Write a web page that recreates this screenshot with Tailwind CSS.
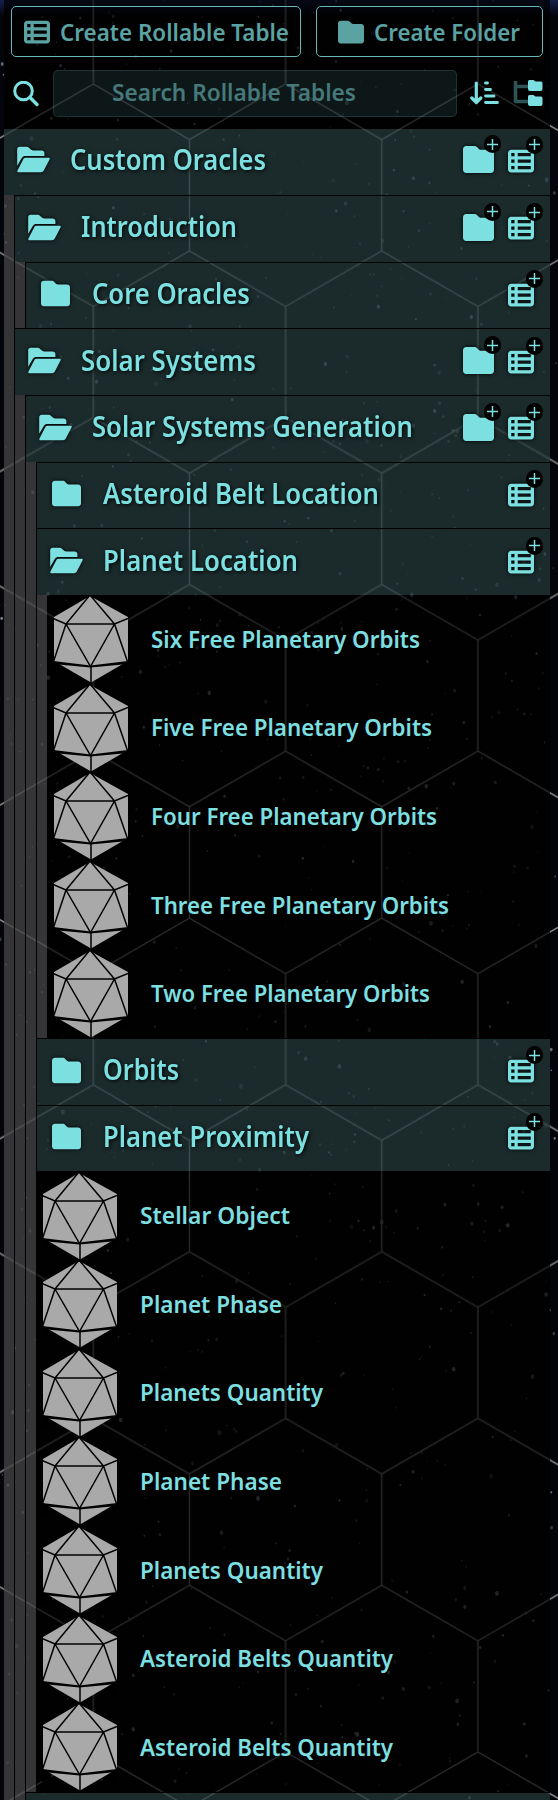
<!DOCTYPE html>
<html lang="en">
<head>
<meta charset="utf-8">
<title>Rollable Tables</title>
<script src="https://cdn.jsdelivr.net/npm/@tailwindcss/browser@4"></script>
</head>
<body class="bg-black">
<svg class="hidden">
  <symbol id="open" viewBox="0 0 576 512"><path d="M84 224L0 365V76C0 48 18 32 44 32H166c17 0 33 7 45 19l31 28c12 11 28 17 45 17H432c28 0 48 20 48 48v48H144c-25 0-48 12-60 32zm30 16C121 230 132 224 146 224H556c16 0 24 14 17 28l-104 198C459 470 443 480 422 480H22c-16 0-24-14-17-28l109-212z"/></symbol>
  <symbol id="folder" viewBox="0 0 512 512"><path d="M54 480H458c32 0 54-22 54-54V150c0-32-22-54-54-54H298c-14 0-24-5-34-14L234 52C220 38 206 32 186 32H54C22 32 0 54 0 86V426c0 32 22 54 54 54z"/></symbol>
  <symbol id="list" viewBox="0 0 512 512"><path fill-rule="evenodd" d="M0 96C0 60.700 28.700 32 64 32H448c35.300 0 64 28.700 64 64V416c0 35.300-28.700 64-64 64H64c-35.300 0-64-28.700-64-64V96zm64 0v64h64V96H64zm384 0H192v64H448V96zM64 224v64h64V224H64zm384 0H192v64H448V224zM64 352v64h64V352H64zm384 0H192v64H448V352z"/></symbol>
  <symbol id="d20" viewBox="0 0 75 88"><path fill="#a9a9a9" d="M37 1 75 22V66L38 87.500 1 66V22z"/><path fill="none" stroke="#000" stroke-width="1.500" d="M37 0 13 29M37 0 61.500 29M0 23.500 13 29H61.500L75 23.500M13 29 37.500 71.500 61.500 29M13 29 0 68M61.500 29 75 68M38 71.500V88"/><path d="M0 66 37.500 70.500 75 66V69L37.500 72.500 0 69zM-1 65 10 74-1 80zM76 65 65 74 76 80z"/></symbol>
</svg>

<div class="relative h-[1800px] w-[558px] overflow-hidden bg-[#04050a] font-['Noto_Sans','Liberation_Sans',sans-serif] font-semibold text-[#7cdfe0]">
  <svg class="absolute inset-0" width="558" height="1800">
    <defs>
      <pattern id="hex" x="93.300" y="84" width="192.300" height="333.600" patternUnits="userSpaceOnUse">
        <path fill="none" stroke="#949494" stroke-width="1.400" d="M0 0 96.150 55.500 192.300 0M96.150 55.500V167L0 222.500M96.150 167 192.300 222.500M0 222.500V333.600M192.300 222.500V333.600"/>
      </pattern>
      <linearGradient id="glow" x2="0" y2="1"><stop stop-color="#16204c"/><stop offset="1" stop-color="#16204c" stop-opacity="0"/></linearGradient>
    </defs>
    <rect width="558" height="16" fill="url(#glow)"/>
    <g id="stars" fill="#a9b4c8"></g>
    <rect width="558" height="1800" fill="url(#hex)"/>
  </svg>

  <div class="relative ml-1 h-[1800px] w-[546px] bg-black/72">
    <div class="flex gap-[15px] pt-[6px] pl-[7px]">
      <div class="flex h-[51px] w-[290px] items-center rounded-[5px] border border-[#69b9b8] pl-[12px] text-[#5ba3a3]">
        <svg class="size-[26px] shrink-0 fill-current"><use href="#list"/></svg>
        <svg class="ml-[10px] h-[33px] shrink-0 overflow-visible fill-current text-[24px]" width="231"><text y="26" textLength="229" lengthAdjust="spacingAndGlyphs">Create Rollable Table</text></svg>
      </div>
      <div class="flex h-[51px] w-[227px] items-center rounded-[5px] border border-[#69b9b8] pl-[21px] text-[#5ba3a3]">
        <svg class="size-[26px] shrink-0 fill-current"><use href="#folder"/></svg>
        <svg class="ml-[10px] h-[33px] shrink-0 overflow-visible fill-current text-[24px]" width="147"><text y="26" textLength="146" lengthAdjust="spacingAndGlyphs">Create Folder</text></svg>
      </div>
    </div>

    <div class="mt-[13px] flex h-[47px] items-center pl-[9px]">
      <svg class="size-[26px]" viewBox="0 0 26 26" fill="none" stroke="currentColor" stroke-width="3"><circle cx="10.500" cy="10" r="8.800"/><path stroke-linecap="round" stroke-width="3.400" d="m17 16.500 7 7"/></svg>
      <div class="ml-[14px] flex h-[47px] w-[404px] items-center rounded-[5px] border border-[#7cdfe0]/15 bg-[#7cdfe0]/10 pl-[58px] text-[#46797a]">
        <svg class="h-[33px] shrink-0 overflow-visible fill-current text-[24px]" width="246"><text y="24" textLength="244" lengthAdjust="spacingAndGlyphs">Search Rollable Tables</text></svg>
      </div>
      <svg class="-mt-[2px] ml-[13px] h-[24px] w-[29px]" viewBox="0 0 29 24" fill="none" stroke="currentColor" stroke-width="3.200" stroke-linecap="round" stroke-linejoin="round"><path d="M6.300 2V21M1.800 17 6.300 21.500 10.800 17"/><path stroke-width="2.800" d="M15.500 2h2M15.500 8.500h5M15.500 15h8.500M15.500 21.500h12"/></svg>
      <svg class="-mt-px ml-[14px] h-[27px] w-[30px]" viewBox="0 0 30 27"><path fill="none" stroke="#2f5455" stroke-width="3.600" stroke-linejoin="round" d="M2.500 1V21.500H15M2.500 6.500H15"/><path fill="#7cdfe0" d="M16.500 0h4l2 1.500H28q1.500 0 1.500 1.500V9q0 2-2 2H17q-2 0-2-2V1.500Q15 0 16.500 0zM16.500 15h4l2 1.500H28q1.500 0 1.500 1.500V24q0 2-2 2H17q-2 0-2-2V16.500q0-1.500 1.500-1.500z"/></svg>
    </div>
    <div id="tree" class="mt-[12px]"></div>
  </div>
</div>

<script>
// Folder: [name, text width, open, may hold subfolders, children]; table: [name, text width]
const data = [
  ['Custom Oracles', 196, 1, 1, [
    ['Introduction', 156, 1, 1, [['Core Oracles', 158, 0, 0, []]]],
    ['Solar Systems', 175, 1, 1, [
      ['Solar Systems Generation', 321, 1, 1, [
        ['Asteroid Belt Location', 276, 0, 0, []],
        ['Planet Location', 195, 1, 0, [
          ['Six Free Planetary Orbits', 269], ['Five Free Planetary Orbits', 281], ['Four Free Planetary Orbits', 286],
          ['Three Free Planetary Orbits', 298], ['Two Free Planetary Orbits', 279]]],
        ['Orbits', 76, 0, 0, []],
        ['Planet Proximity', 206, 0, 0, []],
        ['Stellar Object', 150], ['Planet Phase', 142], ['Planets Quantity', 183], ['Planet Phase', 142],
        ['Planets Quantity', 183], ['Asteroid Belts Quantity', 253], ['Asteroid Belts Quantity', 253]]],
      ['', 1, 0, 0, []]]]]]];

const plus = pos => `<span class="absolute left-full flex h-[18px] w-[17px] items-center justify-center rounded-full bg-black ${pos}"><svg class="size-[11px] stroke-current" viewBox="0 0 11 11"><path stroke-width="1.500" d="M5.500 0V11M0 5.500H11"/></svg></span>`;

function node(n, top, nested) {
  if (n.length === 2) return `<div class="flex h-[88.620px] items-center ${nested ? 'pl-[6px]' : 'pl-[5px]'}">
    <svg class="h-[88px] w-[75px] shrink-0"><use href="#d20"/></svg>
    <svg class="ml-[23px] h-[33px] shrink-0 overflow-visible fill-current text-[24px]" width="${n[1]}"><text y="25" textLength="${n[1]}" lengthAdjust="spacingAndGlyphs">${n[0]}</text></svg></div>`;
  const row = `<div class="${top ? 'h-[66px]' : 'h-[66.670px] border-t border-black'}"><div class="flex h-full items-center bg-[#87d7d8]/20 pr-[16px] pl-[13px] ${top ? 'pb-[5px]' : 'pb-[3px]'}">
    <svg class="${n[2] ? 'h-[29px] w-[33px]' : 'mx-[2px] size-[29px]'} shrink-0 fill-current drop-shadow-[0_0_2px_#000]"><use href="${n[2] ? '#open' : '#folder'}"/></svg>
    <svg class="ml-[20px] h-[38px] shrink-0 overflow-visible fill-current text-[28px] drop-shadow-[1px_1px_2px_#000]" width="${n[1]}"><text y="29" textLength="${n[1]}" lengthAdjust="spacingAndGlyphs">${n[0]}</text></svg>
    <div class="ml-auto flex shrink-0 items-center gap-[14px]">
      ${n[3] ? `<span class="relative"><svg class="size-[31px] fill-current drop-shadow-[0_0_2px_#000]"><use href="#folder"/></svg>${plus('-top-[9px] -ml-[10px]')}</span>` : ''}
      <span class="relative mt-[2px]"><svg class="size-[26px] fill-current drop-shadow-[0_0_2px_#000]"><use href="#list"/></svg>${plus('-top-[12px] -ml-[8px]')}</span>
    </div></div></div>`;
  if (!n[4].length) return row;
  const tables = n[4][0].length === 2;
  return `${row}<div class="flex"><div class="w-[10px] shrink-0 bg-[#f0ecf0]/22"></div>
    <div class="min-w-0 flex-1 ${tables ? '' : 'border-l border-black'}">${n[4].map(c => node(c, false, tables)).join('')}</div></div>`;
}
document.getElementById('tree').innerHTML = data.map(n => node(n, true)).join('');

// Star field
let seed = 7;
const rnd = () => (seed = (seed * 16807) % 2147483647) / 2147483647;
let s = '';
for (let i = 0; i < 900; i++) {
  const r = 0.6 + rnd() * rnd() * 1.5;
  s += `<ellipse cx="${(rnd() * 558).toFixed(1)}" cy="${(rnd() * 1800).toFixed(1)}" rx="${r.toFixed(2)}" ry="${(r * 1.3).toFixed(2)}" opacity="${(0.25 + rnd() * 0.5).toFixed(2)}"/>`;
}
document.getElementById('stars').innerHTML = s;
</script>
</body>
</html>
